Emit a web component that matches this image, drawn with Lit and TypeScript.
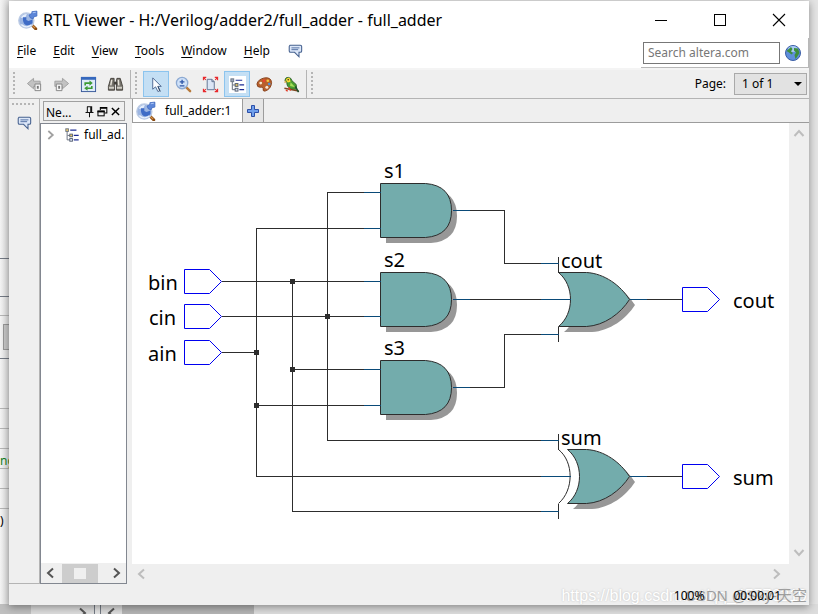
import { LitElement, html, svg, css } from "lit";
import { customElement, property, state } from "lit/decorators.js";
import { classMap } from "lit/directives/class-map.js";

const glyphs: Record<string, unknown> = {
  app: svg`
    <path d="M12.500 13.500L16 17" stroke="#8a4b12" stroke-width="2.600" stroke-linecap="round"/>
    <path d="M12.500 13.500L15.500 16.300" stroke="#d9964a" stroke-width="1"/>
    <circle cx="7.500" cy="9.500" r="6.800" fill="#9db6e2" stroke="#bccbe4" stroke-width="1.200"/>
    <path d="M2.500 7Q4.500 3.500 8 3.700L6.500 7Z" fill="#e4edfb"/>
    <path d="M4.500 6.500H7.500V9L9.500 10L13 8.500V12Q10 14.500 7 13.500Q4 12 4.500 6.500Z" fill="#3f6cc6"/>
    <path d="M3 13Q7 17 12 13.500" stroke="#e9f0fb" stroke-width="1.200"/>
    <path d="M10 4.500L12.500 3V1.500L17 1V5.500L14.500 6L13.500 8L11 7Z" fill="#5c86d8" stroke="#3f68bd" stroke-width=".7"/>
    <path d="M13.200 2.500L16 2" stroke="#a9c4f4" stroke-width="1"/>`,
  note: svg`
    <path d="M3 2.500H15Q16.500 2.500 16.500 4V9Q16.500 10.500 15 10.500H13.500V15.500L8.500 10.500H4Q2.500 10.500 2.500 9V4Q2.500 2.500 4 2.500Z" fill="#dce7f8" stroke="#46618f" stroke-width="1.200"/>
    <path d="M5 5.500H14M5 7.500H12.500" stroke="#47659c" stroke-width="1"/>`,
  back: svg`
    <path d="M1.500 8L8 2.500V5.500H15V11H8V13.500Z" fill="#c2c2c2" stroke="#a0a0a0"/>
    <path d="M9.500 8.500H15.500V15.500H9.500Z" fill="#f5f5f5" stroke="#858585"/><rect x="11.500" y="10.500" width="2" height="3" fill="#777"/>`,
  forward: svg`
    <path d="M16.500 8L10 2.500V5.500H2V11H10V13.500Z" fill="#c2c2c2" stroke="#a0a0a0"/>
    <path d="M3.500 8.500H9.500V15.500H3.500Z" fill="#f5f5f5" stroke="#858585"/><rect x="5.500" y="10.500" width="2" height="3" fill="#777"/>`,
  refresh: svg`
    <rect x="1.500" y="1.500" width="15" height="15" fill="#dfeafa" stroke="#39599a"/>
    <rect x="1" y="1" width="16" height="3" fill="#3568bd"/>
    <path d="M5.500 10V7.500H10.500" fill="none" stroke="#3c9a35" stroke-width="1.700"/><path d="M10 4.800L13.500 7.500L10 10.200Z" fill="#3c9a35"/>
    <path d="M12.500 10.500V13H7.500" fill="none" stroke="#3c9a35" stroke-width="1.700"/><path d="M8 10.300L4.500 13L8 15.700Z" fill="#3c9a35"/>`,
  find: svg`
    <path d="M4 2.500H7.500V6L8 15H1.500V11ZM10.500 2.500H14L16.500 11V15H10V6Z" fill="#77746d" stroke="#45423d"/>
    <path d="M5 4L4 10M12 4L12.500 10" stroke="#e6e3da" stroke-width="1.500"/>
    <path d="M2 12.500H7.500M10.500 12.500H16" stroke="#d0cdc5" stroke-width="2"/>
    <rect x="7.500" y="6" width="3" height="3" fill="#403e39"/>`,
  select: svg`
    <path d="M5 2V14L8 11.500L10.500 16.500L12.500 15.500L10.500 11H14Z" fill="#fbfdff" stroke="#4c6791"/>
    <path d="M10.500 11L13 16.500" stroke="#2b405f"/>`,
  zoom: svg`
    <path d="M12 12L16 16" stroke="#b87a3b" stroke-width="2.600" stroke-linecap="round"/>
    <circle cx="7.500" cy="7.500" r="6" fill="#cfe1f8" stroke="#8ca9d2" stroke-width="1.400"/>
    <path d="M7.500 4V8.500M5 6.250H10M5 10.500H10" stroke="#2c55a8" stroke-width="1.400"/>`,
  fit: svg`
    <path d="M5.500 3.500H10.500L13 6V14.500H5.500Z" fill="#dbe6f6" stroke="#5f7292"/>
    <path d="M10.500 3.500V6H13" fill="none" stroke="#5f7292"/>
    <path d="M1.500 4.500V1.500H4.500M1.500 1.500L4 4M13.500 1.500H16.500V4.500M16.500 1.500L14 4M1.500 13.500V16.500H4.500M1.500 16.500L4 14M13.500 16.500H16.500V13.500M16.500 16.500L14 14" fill="none" stroke="#e8292c" stroke-width="1.200"/>`,
  tree: svg`
    <path d="M3.500 4.500V14.500H7M4 9.500H7" fill="none" stroke="#5d6676"/>
    <rect x="2" y="2" width="3" height="3" fill="#e2c469" stroke="#6d7787"/>
    <rect x="6.500" y="8" width="3" height="3" fill="#e2c469" stroke="#555f72"/>
    <rect x="6.500" y="13" width="3" height="3" fill="#d7dfec" stroke="#555f72"/>
    <path d="M7 3.500H14M11 9.500H16.500M11 14.500H16.500" stroke="#1d2c94" stroke-width="1.300"/>`,
  treeTool: svg`
    <rect x="0" y="0" width="18" height="18" fill="#fff"/>
    <path d="M3.500 4.500V14.500H7M4 9.500H7" fill="none" stroke="#5d6676"/>
    <rect x="2" y="3" width="3" height="3" fill="#9aa7ba" stroke="#6d7787"/>
    <rect x="6.500" y="8" width="3" height="3" fill="#e2c469" stroke="#555f72"/>
    <rect x="6.500" y="13" width="3" height="3" fill="#d7dfec" stroke="#555f72"/>
    <path d="M7 4.500H14M11 9.500H16M11 14.500H16" stroke="#1d2c94" stroke-width="1.300"/>`,
  palette: svg`
    <path d="M9 2Q16 1 16.500 7Q16 14 9.500 16Q7 16.500 7.500 13Q7 11 4.500 12Q1 12 1 8.500Q2 3.500 9 2Z" fill="#b8602c" stroke="#86401b"/>
    <circle cx="5" cy="7.500" r="1.500" fill="#f4e9cf"/><circle cx="8.500" cy="5" r="1.500" fill="#e9432f"/>
    <circle cx="12.500" cy="5" r="1.400" fill="#f2c93d"/><circle cx="14" cy="8.500" r="1.400" fill="#4e96dc"/><circle cx="11.500" cy="12" r="1.600" fill="#f5e7d4"/>`,
  parrot: svg`
    <path d="M2 4.500Q2.500 1 6 1.500Q9 2 9.500 5L14 9L14.500 14L9 14Q4 12 4 7Z" fill="#4a9e32" stroke="#23531c" stroke-width=".8"/>
    <path d="M3 4Q4 1.500 7 2L8 6L5 7Z" fill="#ffd92f"/><path d="M2 4.500L1.500 7.500L4 6.500Z" fill="#d8a53f"/>
    <circle cx="5.500" cy="4" r=".8" fill="#222"/><path d="M8 6.500L13 12L7.500 10.500Z" fill="#a5dd57"/>
    <path d="M1.500 13L16.500 16" stroke="#7c4720" stroke-width="1.600"/>
    <path d="M13 11L16.500 17" stroke="#1d4f2c" stroke-width="1.600"/>
    <path d="M6 12L8 15.500M3 15L5 16" stroke="#e23a25" stroke-width="1.400"/>`,
  globe: svg`
    <circle cx="9" cy="9" r="7.500" fill="#5f8fdb" stroke="#3b5ea6"/>
    <ellipse cx="9" cy="5" rx="5" ry="3" fill="#a9c9f3"/>
    <path d="M2.500 7L7 3L8.500 5L7 7.500L9 9L7.500 10.500L5 8.500ZM10 4L14 4.500L15.500 9L13 13L11.500 15L10.500 11L12 8.500L10 6.500Z" fill="#3e8f3c"/>`,
  plus: svg`<path d="M7.500 3.500H10.500V7.500H14.500V10.500H10.500V14.500H7.500V10.500H3.500V7.500H7.500Z" fill="#6f9fec" stroke="#2c4fa8" stroke-width="1"/>`,
  pin: svg`<path d="M5.500 2.500H12V10.500M6 2.500V10.500M10.700 2.500V10.500M3.500 10.500H14.500M9 11V17" fill="none" stroke="#111" stroke-width="1.400"/>`,
  float: svg`<path d="M6 7V3.500H15V11H12" fill="none" stroke="#000" stroke-width="1.400"/><path d="M6 4H15" stroke="#000" stroke-width="2.500"/><rect x="2.700" y="8.500" width="8.600" height="6.500" fill="#efefef" stroke="#000" stroke-width="1.400"/><path d="M2 9H12" stroke="#000" stroke-width="2.500"/>`,
  close: svg`<path d="M4 4L14 14M14 4L4 14" stroke="#000" stroke-width="2"/>`,
  minimize: svg`<path d="M3 9.500H15" stroke="#000"/>`,
  maximize: svg`<rect x="3.500" y="3.500" width="11" height="11" fill="none" stroke="#000"/>`,
  exit: svg`<path d="M3 3L15 15M15 3L3 15" stroke="#000" stroke-width="1.100"/>`,
  left: svg`<path d="M12 4.500L7 9L12 13.500" fill="none" stroke="currentColor" stroke-width="2"/>`,
  right: svg`<path d="M6 4.500L11 9L6 13.500" fill="none" stroke="currentColor" stroke-width="2"/>`,
  up: svg`<path d="M4.500 11L9 6L13.500 11" fill="none" stroke="currentColor" stroke-width="2"/>`,
  down: svg`<path d="M4.500 6L9 11L13.500 6" fill="none" stroke="currentColor" stroke-width="2"/>`,
};

@customElement("ui-icon")
class UiIcon extends LitElement {
  @property() name = "";
  static styles = css`
    :host { display: inline-flex; width: 18px; height: 18px; flex: none; }
    svg { width: 100%; height: 100%; display: block; }
  `;
  render() {
    return html`<svg viewBox="0 0 18 18" fill="none" aria-hidden="true">${glyphs[this.name]}</svg>`;
  }
}

const AND_BODY = "M0 0H45Q71 2 71 27Q71 52 45 54H0Z";
const OR_BODY = "M0 0H28C46 1 62 13 71 27C62 41 46 53 28 54H0C16 41 16 13 0 0Z";
const XOR_BODY = "M9 0H28C46 1 62 13 71 27C62 41 46 53 28 54H9C25 41 25 13 9 0Z";

const andGates = [
  { label: "s1", y: 183 },
  { label: "s2", y: 272 },
  { label: "s3", y: 360 },
];
const pins = [
  { label: "bin", x: 184, y: 281, tx: 148, ty: 290 },
  { label: "cin", x: 184, y: 316, tx: 149, ty: 325 },
  { label: "ain", x: 184, y: 352, tx: 148, ty: 361 },
  { label: "cout", x: 682, y: 299, tx: 733, ty: 308 },
  { label: "sum", x: 682, y: 476, tx: 733, ty: 485 },
];
const wires = [
  "M221 281H380", "M221 316H380", "M221 352H256",
  "M380 192H327V440H558", "M380 228H256V476H570",
  "M292 281V511H558", "M292 369H380", "M256 405H380",
  "M452 210H504V263H558", "M452 299H570", "M452 387H504V334H558",
  "M629 299H682", "M629 476H682",
  "M558 256V272M558 326V341M558 433V449M558 503V518",
];
const stubs =
  "M363 192H380M363 228H380M363 281H380M363 316H380M363 369H380M363 405H380" +
  "M452 210H469M452 299H469M452 387H469M540 263H558M540 299H570M540 334H558" +
  "M540 440H558M540 476H570M540 511H558M629 299H646M629 476H646";
const joints = [[292, 281], [327, 316], [256, 352], [292, 369], [256, 405]];

@customElement("netlist-schematic")
class NetlistSchematic extends LitElement {
  static styles = css`
    :host { display: block; background: #fff; overflow: hidden; }
    svg { display: block; width: 657px; height: 441px; }
    text { font: 20px "Noto Sans", "Open Sans", sans-serif; fill: #000; }
    .line { fill: none; stroke: #2d2d2d; shape-rendering: crispEdges; }
    .stub { fill: none; stroke: #0a4a78; shape-rendering: crispEdges; }
    .joint { fill: #2d2d2d; shape-rendering: crispEdges; }
    .shadow { fill: #979797; }
    .gate { fill: #73acac; stroke: #2d2d2d; }
    .arc { fill: none; stroke: #2d2d2d; }
    .port { fill: #fff; stroke: #0000f0; }
  `;
  gate(body: string, x: number, y: number) {
    return svg`
      <path class="shadow" d=${body} transform="translate(${x + 6} ${y + 6})"/>
      <path class="gate" d=${body} transform="translate(${x + 0.5} ${y + 0.5})"/>`;
  }
  render() {
    return html`<svg viewBox="132 123 657 441" role="img" aria-label="full_adder netlist">
      ${andGates.map((g) => this.gate(AND_BODY, 380, g.y))}
      ${this.gate(OR_BODY, 558, 272)}
      ${this.gate(XOR_BODY, 558, 449)}
      <path class="arc" d="M558.5 449.500C574 462 574 490 558.500 503.500"/>
      <g transform="translate(.5 .5)">
        ${wires.map((d) => svg`<path class="line" d=${d}/>`)}
        <path class="stub" d=${stubs}/>
        ${pins.map((p) => svg`<path class="port" d="M${p.x} ${p.y - 12}h25l12 12l-12 12h-25z"/>`)}
      </g>
      ${joints.map(([x, y]) => svg`<rect class="joint" x=${x - 2} y=${y - 2} width="5" height="5"/>`)}
      ${andGates.map((g) => svg`<text x="384" y=${g.y - 5}>${g.label}</text>`)}
      <text x="561" y="268">cout</text>
      <text x="561" y="445">sum</text>
      ${pins.map((p) => svg`<text x=${p.tx} y=${p.ty}>${p.label}</text>`)}
    </svg>`;
  }
}

@customElement("app-root")
class AppRoot extends LitElement {
  @state() tool = "select";

  static styles = css`
    :host {
      display: flex; position: relative; box-sizing: border-box; min-height: 100vh;
      padding: 1px 9px 9px; background: #e4e4e4; overflow: hidden;
      font: 12px/16px "Noto Sans", "Open Sans", "Noto Sans CJK SC", sans-serif; color: #000;
    }
    button, input, select { font: inherit; color: inherit; margin: 0; }
    button { display: flex; align-items: center; justify-content: center; padding: 0; border: 0; background: none; }
    .desk-left { position: absolute; left: 0; top: 0; bottom: 0; width: 9px; background: linear-gradient(90deg, #f4f4f4, #dedede); }
    .desk-rows { position: absolute; left: 0; right: 0; top: 258px; height: 270px; display: grid; grid-template-rows: 38px 19px 43px 50px 20px 20px 20px 20px 20px 20px; line-height: 24px; }
    .desk-rows span { border-top: 1px solid #b5b5b5; white-space: nowrap; }
    .desk-rows .dark { border-color: #747a84; }
    .desk-rows .box::before { content: ""; display: block; width: 8px; height: 24px; margin: 8px 0 0 3px; border: 1px solid #999; background: #c8c8c8; }
    .desk-rows .code { color: #14801a; }
    .desk-bottom { position: absolute; left: 0; right: 0; bottom: 0; height: 10px; display: flex; align-items: flex-start; background: #dcdcdc; color: #555; }
    .desk-bottom span { height: 10px; background: #bfbfbf; }
    .desk-bottom .corner { width: 31px; margin-right: 43px; }
    .desk-bottom .gap { box-sizing: border-box; width: 7px; margin: 0 1px 0 2px; border: 1px solid #747a84; border-width: 0 1px; background: #e4e4e4; }
    .desk-bottom .thumb { width: 132px; margin-left: 2px; background: #b4b4b4; }
    .window { position: relative; flex: 1; min-width: 0; display: flex; flex-direction: column; background: #fff; box-shadow: 0 2px 8px #0006; }
    .title { display: flex; align-items: center; gap: 5px; height: 37px; padding: 0 21px 0 9px; font-size: 16px; line-height: 24px; }
    .title ui-icon { width: 20px; height: 20px; }
    .title h1 { margin: 0 auto 0 0; font: inherit; white-space: nowrap; }
    .controls { display: flex; gap: 41px; }
    .controls ui-icon { width: 18px; height: 18px; }
    .menus { display: flex; height: 30px; padding-left: 8px; }
    .menus nav { display: flex; align-items: center; gap: 17px; margin-right: auto; padding-bottom: 4px; }
    .menus nav ui-icon, .dock ui-icon { width: 16px; height: 16px; }
    .menus u { text-underline-offset: 2px; }
    .search { display: flex; align-items: center; gap: 4px; padding: 0 6px 0 2px; border: 1px solid #b8b8b8; border-width: 0 1px 1px 0; }
    .search input { box-sizing: border-box; width: 137px; height: 22px; padding: 0 4px; border: 1px solid #777; background: #fff; }
    .search input::placeholder { color: #777; opacity: 1; }
    .toolbar { display: flex; box-sizing: border-box; height: 31px; border-top: 2px solid #f4f4f4; border-bottom: 1px solid #b4b4b4; background: #efefef; }
    .group { display: flex; align-items: center; gap: 1px; padding: 0 2px 0 4px; border-right: 1px solid #b4b4b4; }
    .group.last { border: 0; }
    .grip { width: 2px; height: 24px; margin-right: 5px; background: repeating-linear-gradient(#b5b5b5 0 2px, transparent 2px 4px); }
    .tool { box-sizing: border-box; width: 26px; height: 26px; border: 1px solid transparent; }
    .tool ui-icon { width: 17px; height: 17px; }
    .tool.on { border-color: #8cc4ee; background: #c4dff4; }
    .page { display: flex; align-items: center; gap: 8px; margin-left: auto; padding-right: 2px; }
    .picker { position: relative; display: flex; }
    .picker::after { content: ""; position: absolute; right: 5px; top: 9px; border: 4px solid transparent; border-top-color: #000; pointer-events: none; }
    select { box-sizing: border-box; width: 73px; height: 22px; padding: 0 7px; border: 1px solid #a9a9a9; border-radius: 0; background: #e2e2e2; appearance: none; }
    .body { flex: 1; display: flex; background: #efefef; }
    .dock { display: flex; flex-direction: column; align-items: center; gap: 10px; width: 31px; box-sizing: border-box; padding-top: 4px; border-right: 1px solid #b4b4b4; border-bottom: 1px solid #b4b4b4; }
    .dock i { width: 24px; height: 2px; background: repeating-linear-gradient(90deg, #b5b5b5 0 2px, transparent 2px 4px); }
    .side { display: flex; flex-direction: column; width: 87px; }
    .side header { display: flex; align-items: center; box-sizing: border-box; height: 20px; margin: 2px 2px 2px 3px; padding: 0 2px; border: 1px solid #a0a0a0; }
    .side h2 { margin: 4px auto 0 0; font: inherit; }
    .side header ui-icon { width: 13px; height: 13px; }
    .tree { flex: 1; display: flex; flex-direction: column; border: 1px solid #828790; background: #fff; overflow: hidden; }
    .node { display: flex; align-items: center; gap: 4px; white-space: nowrap; height: 21px; }
    .node ui-icon { width: 16px; height: 16px; }
    .node .twist { color: #a0a0a0; margin: 0 1px 0 2px; }
    .hbar { display: flex; align-items: center; justify-content: space-between; background: #efefef; color: #bdbdbd; }
    .tree .hbar { margin-top: auto; height: 20px; color: #555; }
    .hbar .thumb { display: grid; place-items: center; width: 36px; height: 19px; margin-right: 8px; background: #cdcdcd; }
    .hbar .thumb::after { content: ""; width: 12px; height: 11px; background: #efefef; }
    .view { flex: 1; min-width: 0; display: flex; flex-direction: column; margin-left: 5px; }
    .tabs { display: flex; box-sizing: border-box; height: 24px; border-bottom: 1px solid #9c9c9c; }
    .tab { justify-content: flex-start; gap: 9px; width: 111px; height: 24px; padding-left: 3px; border: 1px solid #9c9c9c; border-width: 0 1px 1px; background: #fff; }
    .tab ui-icon { width: 20px; height: 20px; }
    .add { width: 21px; height: 23px; border-right: 1px solid #9c9c9c; background: #e6e6e6; }
    .sheet { flex: 1; display: flex; background: #fff; }
    netlist-schematic { flex: 1; min-width: 0; }
    .vbar { display: flex; flex-direction: column; justify-content: space-between; align-items: center; width: 20px; background: #efefef; color: #bdbdbd; padding: 2px 0; box-sizing: border-box; }
    .view > .hbar { height: 20px; padding: 0 23px 0 0; }
    .status { position: relative; display: flex; justify-content: flex-end; gap: 29px; height: 21px; padding-right: 28px; line-height: 24px; background: #efefef; }
    .field { position: relative; }
    .mark { position: absolute; top: 0; right: 2px; font: 16px/24px "Liberation Sans", "Noto Sans CJK SC", sans-serif; white-space: nowrap; }
    .mark.link { color: #fff; text-shadow: 0 0 2px #bbb; }
    .mark.author { color: #888c; font-size: 15px; }
  `;

  toolButton(name: string, label: string) {
    const on = name === this.tool || name === "treeTool";
    return html`<button class=${classMap({ tool: true, on })} aria-label=${label}
      @click=${() => (this.tool = name)}><ui-icon name=${name}></ui-icon></button>`;
  }

  render() {
    return html`
      <div class="desk-left"><div class="desk-rows">
        <span class="dark"></span><span class="dark"></span><span class="box"></span><span class="dark"></span><span></span>
        <span></span><span class="code">ng</span><span></span><span></span><span>)</span>
      </div></div>
      <div class="desk-bottom">
        <span class="corner"></span>
        <ui-icon name="right"></ui-icon><span class="gap"></span><ui-icon name="left"></ui-icon>
        <span class="thumb"></span>
      </div>
      <main class="window">
        <div class="title">
          <ui-icon name="app"></ui-icon>
          <h1>RTL Viewer - H:/Verilog/adder2/full_adder - full_adder</h1>
          <div class="controls">
            <button aria-label="Minimize"><ui-icon name="minimize"></ui-icon></button>
            <button aria-label="Maximize"><ui-icon name="maximize"></ui-icon></button>
            <button aria-label="Close"><ui-icon name="exit"></ui-icon></button>
          </div>
        </div>
        <div class="menus">
          <nav>
            ${["File", "Edit", "View", "Tools", "Window", "Help"].map(
              (m) => html`<button><span><u>${m[0]}</u>${m.slice(1)}</span></button>`
            )}
            <button aria-label="Feedback"><ui-icon name="note"></ui-icon></button>
          </nav>
          <div class="search">
            <input type="text" aria-label="Search altera.com" placeholder="Search altera.com" />
            <button aria-label="Search"><ui-icon name="globe"></ui-icon></button>
          </div>
        </div>
        <div class="toolbar">
          <div class="group"><i class="grip"></i>
            ${this.toolButton("back", "Back")}${this.toolButton("forward", "Forward")}
            ${this.toolButton("refresh", "Refresh")}${this.toolButton("find", "Find")}
          </div>
          <div class="group"><i class="grip"></i>
            ${this.toolButton("select", "Selection tool")}${this.toolButton("zoom", "Zoom tool")}
            ${this.toolButton("fit", "Fit in window")}${this.toolButton("treeTool", "Netlist navigator")}
            ${this.toolButton("palette", "Color settings")}${this.toolButton("parrot", "Bird's eye view")}
          </div>
          <div class="group last"><i class="grip"></i></div>
          <div class="page">
            <label for="page">Page:</label>
            <span class="picker"><select id="page"><option>1 of 1</option></select></span>
          </div>
        </div>
        <div class="body">
          <div class="dock"><i></i><button aria-label="Messages"><ui-icon name="note"></ui-icon></button></div>
          <aside class="side">
            <header><h2>Ne...</h2>
              <button aria-label="Pin"><ui-icon name="pin"></ui-icon></button>
              <button aria-label="Float"><ui-icon name="float"></ui-icon></button>
              <button aria-label="Close panel"><ui-icon name="close"></ui-icon></button>
            </header>
            <div class="tree">
              <div class="node"><ui-icon class="twist" name="right"></ui-icon><ui-icon name="tree"></ui-icon><span>full_ad.</span></div>
              <div class="hbar"><ui-icon name="left"></ui-icon><span class="thumb"></span><ui-icon name="right"></ui-icon></div>
            </div>
          </aside>
          <section class="view">
            <div class="tabs">
              <button class="tab"><ui-icon name="app"></ui-icon>full_adder:1</button>
              <button class="add" aria-label="New tab"><ui-icon name="plus"></ui-icon></button>
            </div>
            <div class="sheet">
              <netlist-schematic></netlist-schematic>
              <div class="vbar"><ui-icon name="up"></ui-icon><ui-icon name="down"></ui-icon></div>
            </div>
            <div class="hbar"><ui-icon name="left"></ui-icon><ui-icon name="right"></ui-icon></div>
          </section>
        </div>
        <footer class="status">
          <span class="mark link">https://blog.csdn.net/qq_45776219</span>
          <span class="mark author">CSDN @Sky-天空</span>
          <span class="field">100%</span><span class="field">00:00:01</span>
        </footer>
      </main>`;
  }
}
